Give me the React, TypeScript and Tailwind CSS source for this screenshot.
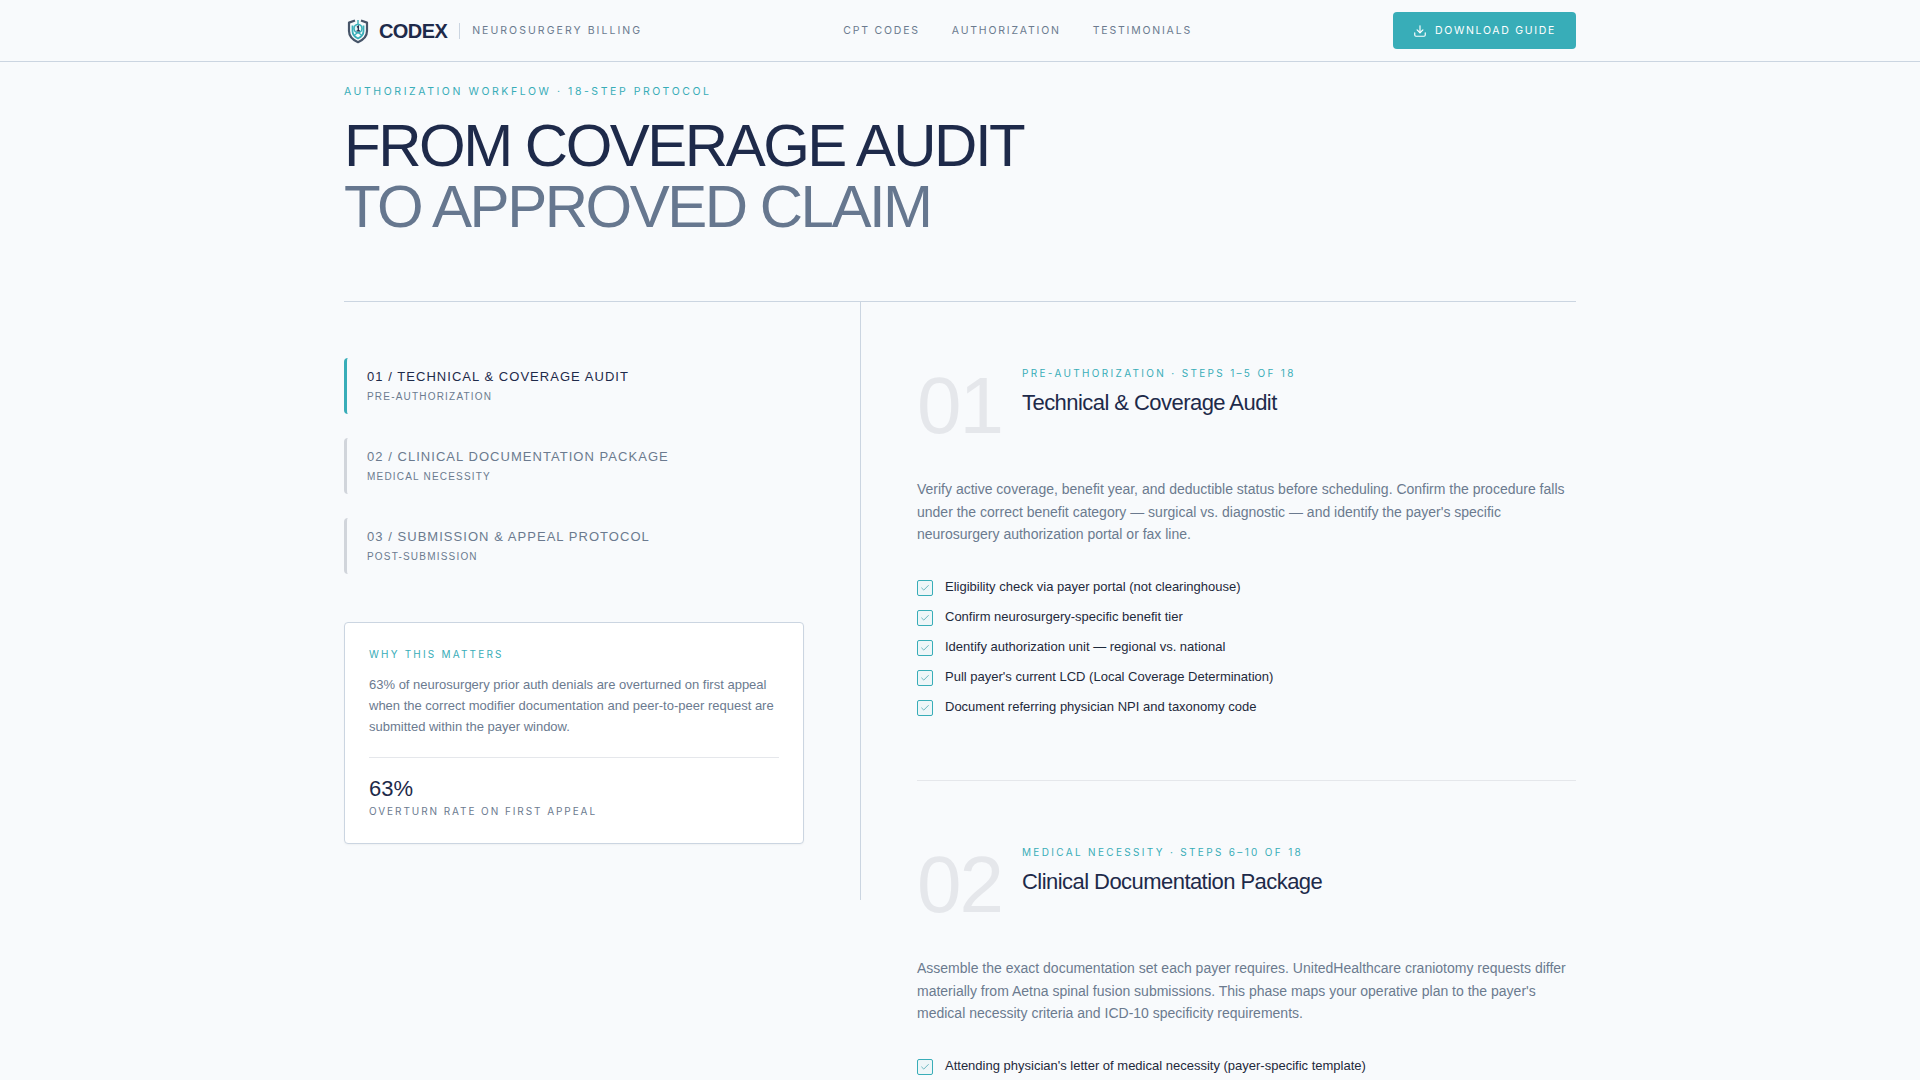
import { Check, Download } from "lucide-react";

const NAV_LINKS = ["CPT CODES", "AUTHORIZATION", "TESTIMONIALS"];

const PHASES = [
  { title: "01 / TECHNICAL & COVERAGE AUDIT", sub: "PRE-AUTHORIZATION", active: true },
  { title: "02 / CLINICAL DOCUMENTATION PACKAGE", sub: "MEDICAL NECESSITY", active: false },
  { title: "03 / SUBMISSION & APPEAL PROTOCOL", sub: "POST-SUBMISSION", active: false },
];

const SECTIONS = [
  {
    num: "01",
    label: "PRE-AUTHORIZATION · STEPS 1–5 OF 18",
    title: "Technical & Coverage Audit",
    body: "Verify active coverage, benefit year, and deductible status before scheduling. Confirm the procedure falls under the correct benefit category — surgical vs. diagnostic — and identify the payer's specific neurosurgery authorization portal or fax line.",
    items: [
      "Eligibility check via payer portal (not clearinghouse)",
      "Confirm neurosurgery-specific benefit tier",
      "Identify authorization unit — regional vs. national",
      "Pull payer's current LCD (Local Coverage Determination)",
      "Document referring physician NPI and taxonomy code",
    ],
  },
  {
    num: "02",
    label: "MEDICAL NECESSITY · STEPS 6–10 OF 18",
    title: "Clinical Documentation Package",
    body: "Assemble the exact documentation set each payer requires. UnitedHealthcare craniotomy requests differ materially from Aetna spinal fusion submissions. This phase maps your operative plan to the payer's medical necessity criteria and ICD-10 specificity requirements.",
    items: ["Attending physician's letter of medical necessity (payer-specific template)"],
  },
];

function Logo() {
  return (
    <svg width="24" height="26" viewBox="0 0 24 26" fill="none" className="ml-[2px] shrink-0">
      {/* shield frame with a notch at the top */}
      <path d="M9 2.5 3 4.6V13C3 18.2 7 22 12 24.2 17 22 21 18.2 21 13V4.6L15 2.5" stroke="#475569" strokeWidth="2.2" strokeLinejoin="round" />
      <path d="M6.5 7.5V13C6.5 16.4 9 19 12 20.5 15 19 17.5 16.4 17.5 13V7.5" stroke="#3aafb9" strokeWidth="1.8" />
      <circle cx="12" cy="10.5" r="4" stroke="#3aafb9" strokeWidth="1.6" fill="#eaf6f7" />
      <path d="M11 9.2 12.3 8.2V12.8M10.6 12.8H14" stroke="#1e2a4a" strokeWidth="1.3" />
      <path d="M12 2V6M8.5 17 12 14.5 15.5 17" stroke="#3aafb9" strokeWidth="1.4" />
    </svg>
  );
}

export default function App() {
  return (
    <div className="h-screen overflow-hidden bg-[#f8fafc] font-['Liberation_Sans',Arial,sans-serif]">
      <nav className="h-[62px] border-b border-[#cbd5e1]">
        <div className="mx-auto flex h-full w-[1280px] items-center justify-between px-6">
          <div className="flex items-center">
            <Logo />
            <span className="ml-[9px] text-[20px] font-bold tracking-[-0.6px] text-[#1e2a4a]">CODEX</span>
            <span className="ml-3 h-4 w-px bg-[#cbd5e1]" />
            <span className="ml-3 font-['Inter',sans-serif] text-[10.5px] tracking-[2.05px] whitespace-nowrap text-[#6b7a8f]">NEUROSURGERY BILLING</span>
          </div>
          <div className="flex items-center gap-8">
            {NAV_LINKS.map((link) => (
              <a key={link} className="font-['Inter',sans-serif] text-[10.5px] tracking-[1.8px] whitespace-nowrap text-[#6b7a8f]">
                {link}
              </a>
            ))}
          </div>
          <button className="flex h-[37px] w-[183px] items-center justify-center gap-2 rounded-sm bg-[#38adb8] font-['Inter',sans-serif] text-[10.5px] tracking-[1.7px] text-white">
            <Download size={14} />
            DOWNLOAD GUIDE
          </button>
        </div>
      </nav>

      <main className="mx-auto w-[1280px] px-6">
        <header className="h-[240px] border-b border-[#cbd5e1] pt-[22px]">
          <p className="font-['Inter',sans-serif] text-[10.5px] leading-[15px] tracking-[2.57px] text-[#38adb8]">
            AUTHORIZATION WORKFLOW · 18-STEP PROTOCOL
          </p>
          <h1 className="mt-4 text-[60px] leading-[61px] font-normal tracking-[-2.5px] text-[#1e2a4a]">
            FROM COVERAGE AUDIT
            <br />
            <span className="text-[#66778f]">TO APPROVED CLAIM</span>
          </h1>
        </header>

        <div className="flex items-start">
          <aside className="h-[598px] w-[517px] shrink-0 border-r border-[#cbd5e1] pt-14 pr-14">
            <div className="flex flex-col gap-6">
              {PHASES.map((p) => (
                <div key={p.title} className={`h-14 rounded-sm border-l-[3px] pt-[9px] pl-5 ${p.active ? "border-[#38adb8]" : "border-[#d1d5db]"}`}>
                  <div className={`text-[13px] leading-5 tracking-[1.04px] ${p.active ? "text-[#1e2a4a]" : "text-[#6b7a8f]"}`}>{p.title}</div>
                  <div className="mt-[2px] text-[10px] leading-[15px] tracking-[1.2px] text-[#6b7a8f]">{p.sub}</div>
                </div>
              ))}
            </div>
            <div className="mt-12 h-[222px] rounded-sm border border-[#cbd5e1] bg-white p-6 shadow-[0_1px_2px_rgba(0,0,0,0.04)]">
              <p className="font-['Inter',sans-serif] text-[10px] leading-[15px] tracking-[2.2px] text-[#38adb8]">WHY THIS MATTERS</p>
              <p className="mt-3 text-[13px] leading-[21px] text-[#6b7a8f]">
                63% of neurosurgery prior auth denials are overturned on first appeal when the correct modifier documentation and peer-to-peer request are submitted within the payer window.
              </p>
              <div className="mt-[20px] border-t border-[#e5e7eb] pt-[17px]">
                <div className="text-[22px] leading-[28px] text-[#1e2a4a]">63%</div>
                <div className="mt-[1px] font-['Inter',sans-serif] text-[10px] leading-[15px] tracking-[1.93px] text-[#6b7a8f]">OVERTURN RATE ON FIRST APPEAL</div>
              </div>
            </div>
          </aside>

          <div className="flex-1 pl-14">
            {SECTIONS.map((s, i) => (
              <section key={s.num} className={i === 0 ? "h-[479px] border-b border-[#e5e7eb] pt-16" : "pt-16"}>
                <div className="flex h-[84px] items-start">
                  <div className="w-[105px] shrink-0 text-[80px] leading-[80px] tracking-[-2px] text-[#e5e7eb]">{s.num}</div>
                  <div>
                    <p className="font-['Inter',sans-serif] text-[10px] leading-[15px] tracking-[2.33px] text-[#38adb8]">{s.label}</p>
                    <h2 className="mt-[7px] text-[22px] leading-[30px] tracking-[-0.55px] text-[#1e2a4a]">{s.title}</h2>
                  </div>
                </div>
                <p className="mt-7 text-[14px] leading-[22.5px] text-[#6b7a8f]">{s.body}</p>
                <ul className="mt-[31px] flex flex-col gap-[10px]">
                  {s.items.map((item) => (
                    <li key={item} className="flex h-5 items-center gap-3 text-[13px] text-[#1e293b]">
                      <span className="mt-[2px] flex size-4 shrink-0 items-center justify-center rounded-[2px] border border-[#38adb8] bg-[#38adb8]/5">
                        <Check size={10} className="text-[#4fa8b5]" />
                      </span>
                      {item}
                    </li>
                  ))}
                </ul>
              </section>
            ))}
          </div>
        </div>
      </main>
    </div>
  );
}
